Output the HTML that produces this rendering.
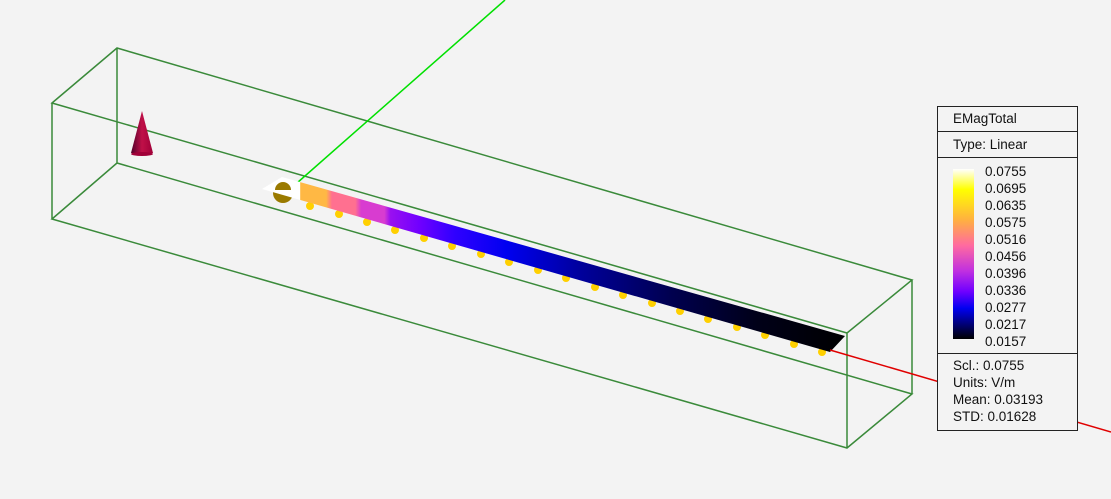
<!DOCTYPE html>
<html><head><style>
body{margin:0;width:1111px;height:499px;background:#f3f3f3;overflow:hidden;position:relative;font-family:"Liberation Sans",sans-serif}
.lg{position:absolute;left:937px;top:106px;width:139px;height:323px;border:1px solid #222;background:#f3f3f3;font-size:13.5px;color:#111}
.sep{position:absolute;left:0;width:139px;border-top:1px solid #222}
.bar{position:absolute;left:15px;top:62px;width:21px;height:170px;background:linear-gradient(#fff,#ff0 12%,#ffb040 30%,#ff6aa0 45%,#c030e0 60%,#7000ff 72%,#0000f0 82%,#000060 93%,#000)}
.v{position:absolute;left:47px;line-height:17px}
</style></head><body>
<svg width="1111" height="499" style="position:absolute;left:0;top:0">
<defs><linearGradient id="g" x1="262" y1="0" x2="845" y2="0" gradientUnits="userSpaceOnUse">
<stop offset="0" stop-color="#fff"/><stop offset="0.065" stop-color="#fff"/><stop offset="0.066" stop-color="#ffb844"/><stop offset="0.11" stop-color="#ffb844"/><stop offset="0.12" stop-color="#ff7090"/><stop offset="0.16" stop-color="#ff7090"/><stop offset="0.17" stop-color="#d83cd0"/><stop offset="0.21" stop-color="#d83cd0"/><stop offset="0.22" stop-color="#9a10f0"/><stop offset="0.27" stop-color="#7000ff"/><stop offset="0.33" stop-color="#3000ff"/><stop offset="0.42" stop-color="#0000f0"/><stop offset="0.55" stop-color="#00009a"/><stop offset="0.7" stop-color="#000050"/><stop offset="0.85" stop-color="#000018"/><stop offset="1" stop-color="#000"/></linearGradient>
<linearGradient id="c" x1="0" x2="1"><stop offset="0" stop-color="#50002a"/><stop offset="0.5" stop-color="#c01048"/><stop offset="1" stop-color="#a00038"/></linearGradient></defs>
<g stroke="#3a8a3a" stroke-width="1.5" fill="none">
<path d="M52 103L117 48L912 280L847 333L52 103ZM52 219L117 163L912 394L847 448L52 219ZM52 103V219M117 48V163M847 333V448M912 280V394"/>
</g>
<line x1="297" y1="183" x2="505" y2="0" stroke="#00e000" stroke-width="1.5"/>
<g fill="#ffd000">
<circle cx="310" cy="206" r="4"/><circle cx="339" cy="214" r="4"/><circle cx="367" cy="222" r="4"/><circle cx="395" cy="230" r="4"/><circle cx="424" cy="238" r="4"/><circle cx="452" cy="246" r="4"/><circle cx="481" cy="254" r="4"/><circle cx="509" cy="262" r="4"/><circle cx="538" cy="270" r="4"/><circle cx="566" cy="278" r="4"/><circle cx="595" cy="287" r="4"/><circle cx="623" cy="295" r="4"/><circle cx="652" cy="303" r="4"/><circle cx="680" cy="311" r="4"/><circle cx="708" cy="319" r="4"/><circle cx="737" cy="327" r="4"/><circle cx="765" cy="335" r="4"/><circle cx="794" cy="344" r="4"/><circle cx="822" cy="352" r="4"/>
</g>
<circle cx="283" cy="193" r="10" fill="#9a7a00"/>
<polygon points="282,177 845,336 830,352 262,189" fill="url(#g)"/>
<path d="M275 190a8 8 0 0 1 16 0z" fill="#9a7a00"/>
<line x1="830" y1="350" x2="1111" y2="432" stroke="#e00000" stroke-width="1.5"/>
<polygon points="142,111 131,153 153,153" fill="url(#c)"/>
<ellipse cx="142" cy="154" rx="11" ry="2" fill="#a00038"/>
</svg>
<div class="lg">
<div style="position:absolute;left:15px;top:4px">EMagTotal</div>
<div class="sep" style="top:24px"></div>
<div style="position:absolute;left:15px;top:30px">Type: Linear</div>
<div class="sep" style="top:50px"></div>
<div class="bar"></div>
<div class="v" style="top:56px">0.0755<br>0.0695<br>0.0635<br>0.0575<br>0.0516<br>0.0456<br>0.0396<br>0.0336<br>0.0277<br>0.0217<br>0.0157</div>
<div class="sep" style="top:246px"></div>
<div style="position:absolute;left:15px;top:250px;line-height:17px">Scl.: 0.0755<br>Units: V/m<br>Mean: 0.03193<br>STD: 0.01628</div>
</div>
</body></html>
